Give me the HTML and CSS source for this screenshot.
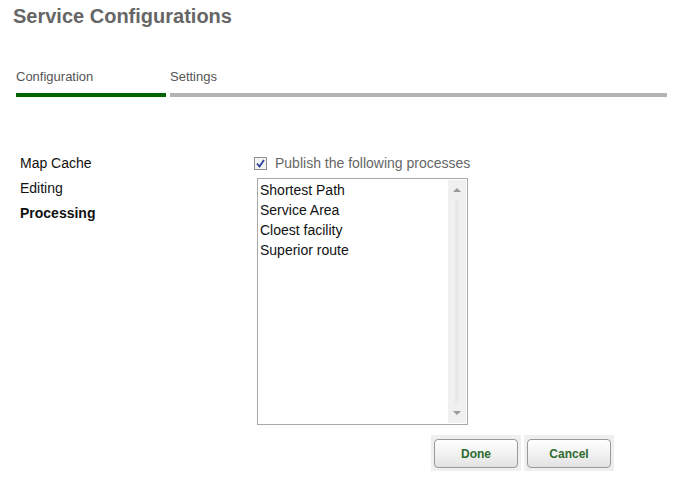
FILE: index.html
```html
<!doctype html>
<html lang="en">
    <head>
        <meta charset="utf-8">
        <title>Service Configurations</title>
        <link rel="stylesheet" href="styles.css">
    </head>
    <body>
        <h1 class="title">Service Configurations</h1>
        <div class="tabs">
            <div class="tab active">Configuration</div>
            <div class="tab rest">Settings</div>
        </div>
        <div class="panel">
            <ul class="nav">
                <li>Map Cache</li>
                <li>Editing</li>
                <li class="current">Processing</li>
            </ul>
            <div class="content">
                <label class="publish">
                    <span class="check">
                        <svg width="9" height="9" viewBox="0 0 9 9"><path d="M1 4.5 L3.5 7.5 L8 1" fill="none" stroke="#2a3f9a" stroke-width="1.8"/></svg>
                    </span>
                    Publish the following processes
                </label>
                <div class="listbox">
                    <ul class="items">
                        <li>Shortest Path</li>
                        <li>Service Area</li>
                        <li>Cloest facility</li>
                        <li>Superior route</li>
                    </ul>
                    <div class="scroll">
                        <span class="arrow up"></span>
                        <span class="track"></span>
                        <span class="arrow down"></span>
                    </div>
                </div>
                <div class="buttons">
                    <div class="btnwrap"><button class="btn">Done</button></div>
                    <div class="btnwrap"><button class="btn">Cancel</button></div>
                </div>
            </div>
        </div>
    </body>
</html>
```

FILE: styles.css
```css
body{margin:0;font:14px "Liberation Sans",Arial,sans-serif;color:#111;background:#fff;}
.title{margin:0;padding:3px 0 0 13px;font-size:20px;line-height:26px;font-weight:bold;color:#666;}
.tabs{display:flex;margin:40px 0 0 16px;width:651px;}
.tab{font-size:13px;color:#555;line-height:16px;padding-bottom:8px;border-bottom:4px solid #b3b3b3;}
.tab.active{width:150px;border-bottom-color:#006400;margin-right:4px;}
.tab.rest{flex:1;}
.panel{display:flex;margin-top:56px;}
.nav{list-style:none;margin:-2px 0 0;padding:0 0 0 20px;width:237px;}
.nav li{line-height:25px;}
.nav li.current{font-weight:bold;}
.content{display:flex;flex-direction:column;}
.publish{display:flex;align-items:center;gap:8px;color:#666;line-height:20px;margin-left:-3px;}
.check{width:11px;height:11px;border:1px solid #8f8f8f;background:#f4f4f4;display:flex;align-items:center;justify-content:center;}
.listbox{display:flex;width:209px;height:245px;border:1px solid #a9a9a9;margin-top:5px;}
.items{list-style:none;margin:0;padding:1px 0 0 2px;flex:1;}
.items li{line-height:20px;}
.scroll{width:18px;margin:1px 1px 1px 0;background:#f0f0f0;display:flex;flex-direction:column;align-items:center;}
.track{flex:1;width:4px;background:#e8e8e8;}
.arrow{width:0;height:0;border-left:4px solid transparent;border-right:4px solid transparent;margin:8px 0;}
.arrow.up{border-bottom:4px solid #9a9a9a;}
.arrow.down{border-top:4px solid #9a9a9a;}
.buttons{display:flex;gap:3px;margin:10px 0 0 174px;}
.btnwrap{background:#efefef;padding:4px 3px 3px;}
.btn{width:84px;height:29px;border:1px solid #999;border-radius:4px;background:linear-gradient(#fff,#f2f2f2 50%,#e2e2e2);font:bold 12px "Liberation Sans",Arial,sans-serif;color:#2e6b2e;padding:0;}
```
